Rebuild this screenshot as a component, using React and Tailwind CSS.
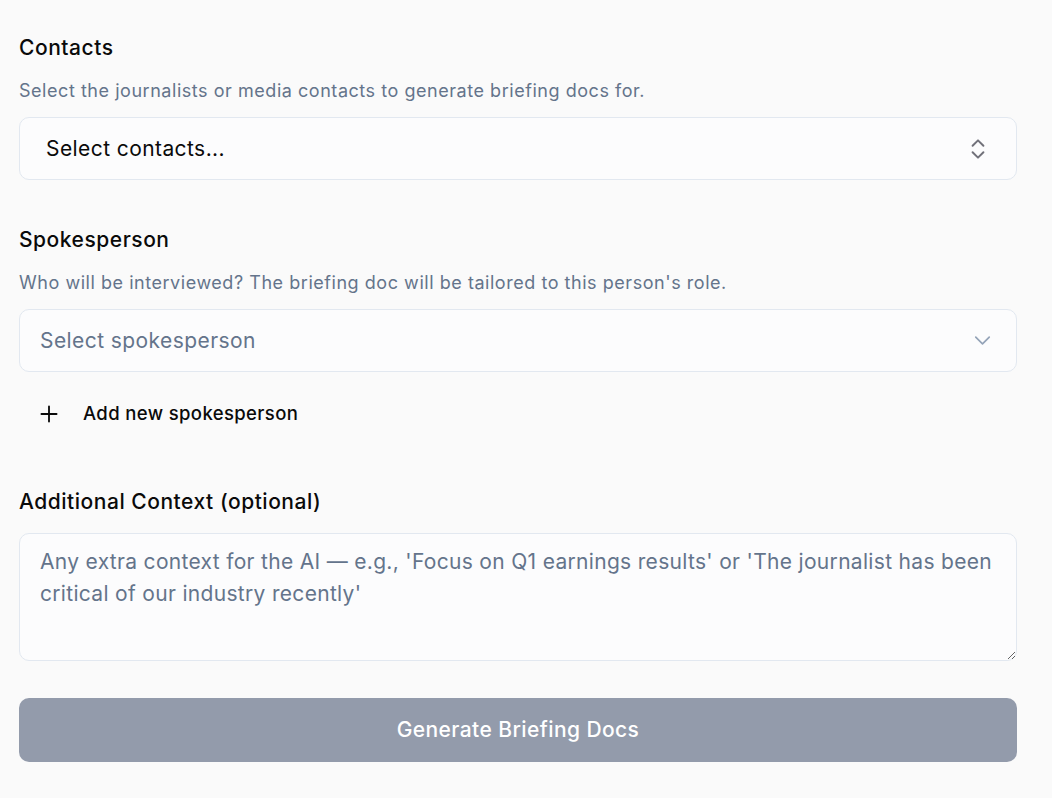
import React, { useState } from 'react';
import { ChevronsUpDown, ChevronDown, Plus } from 'lucide-react';

export default function App() {
  const [context, setContext] = useState('');

  return (
    <div
      className="min-h-screen bg-[#fafafa] text-[#0a0a0a] px-[19px] pt-[34px] pb-10"
      style={{ fontFamily: 'Inter, "Noto Sans", sans-serif' }}
    >
      <div className="w-[998px]">
        {/* Contacts */}
        <div>
          <p className="text-[21px] leading-[28px] font-medium tracking-[0.025em]">Contacts</p>
          <p className="mt-[17px] text-[18px] leading-[24px] tracking-[0.03em] text-[#64748b]">
            Select the journalists or media contacts to generate briefing docs for.
          </p>
          <button
            type="button"
            className="mt-[14px] w-full h-[63px] flex items-center justify-between rounded-[10px] border border-[#e2e8f0] bg-[#fcfcfd] pl-[26px] pr-[25px] text-left"
          >
            <span className="text-[21px] tracking-[0.02em]">Select contacts...</span>
            <ChevronsUpDown className="h-[26px] w-[26px] text-[#71717a]" strokeWidth={1.8} />
          </button>
        </div>

        {/* Spokesperson */}
        <div className="mt-[46px]">
          <p className="text-[21px] leading-[28px] font-medium tracking-[0.025em]">Spokesperson</p>
          <p className="mt-[17px] text-[18px] leading-[24px] tracking-[0.03em] text-[#64748b]">
            Who will be interviewed? The briefing doc will be tailored to this person's role.
          </p>
          <button
            type="button"
            className="mt-[14px] w-full h-[63px] flex items-center justify-between rounded-[10px] border border-[#e2e8f0] bg-[#fcfcfd] pl-[20px] pr-[20px] text-left"
          >
            <span className="text-[21px] tracking-[0.02em] text-[#64748b]">Select spokesperson</span>
            <ChevronDown className="h-[27px] w-[27px] text-[#94a3b8]" strokeWidth={1.5} />
          </button>
          <button
            type="button"
            className="mt-[12px] h-[60px] flex items-center gap-[21px] pl-[17px] pr-4 text-[18.5px] font-medium tracking-[0.02em]"
          >
            <Plus className="h-[26px] w-[26px]" strokeWidth={1.7} />
            Add new spokesperson
          </button>
        </div>

        {/* Additional context */}
        <div className="mt-[44px]">
          <p className="text-[21px] leading-[28px] font-medium tracking-[0.025em]">Additional Context (optional)</p>
          <textarea
            value={context}
            onChange={e => setContext(e.target.value)}
            placeholder="Any extra context for the AI — e.g., 'Focus on Q1 earnings results' or 'The journalist has been critical of our industry recently'"
            className="mt-[17px] block w-full h-[128px] rounded-[10px] border border-[#e2e8f0] bg-[#fcfcfd] pl-[20px] pr-[14px] py-[12px] text-[21px] leading-[32px] tracking-[0.015em] placeholder:text-[#64748b] focus:outline-none"
          />
        </div>

        <button
          type="button"
          disabled
          className="mt-[37px] w-full h-[64px] rounded-[10px] bg-[#939bab] text-white text-[21px] font-medium tracking-[0.02em]"
        >
          Generate Briefing Docs
        </button>
      </div>
    </div>
  );
}
